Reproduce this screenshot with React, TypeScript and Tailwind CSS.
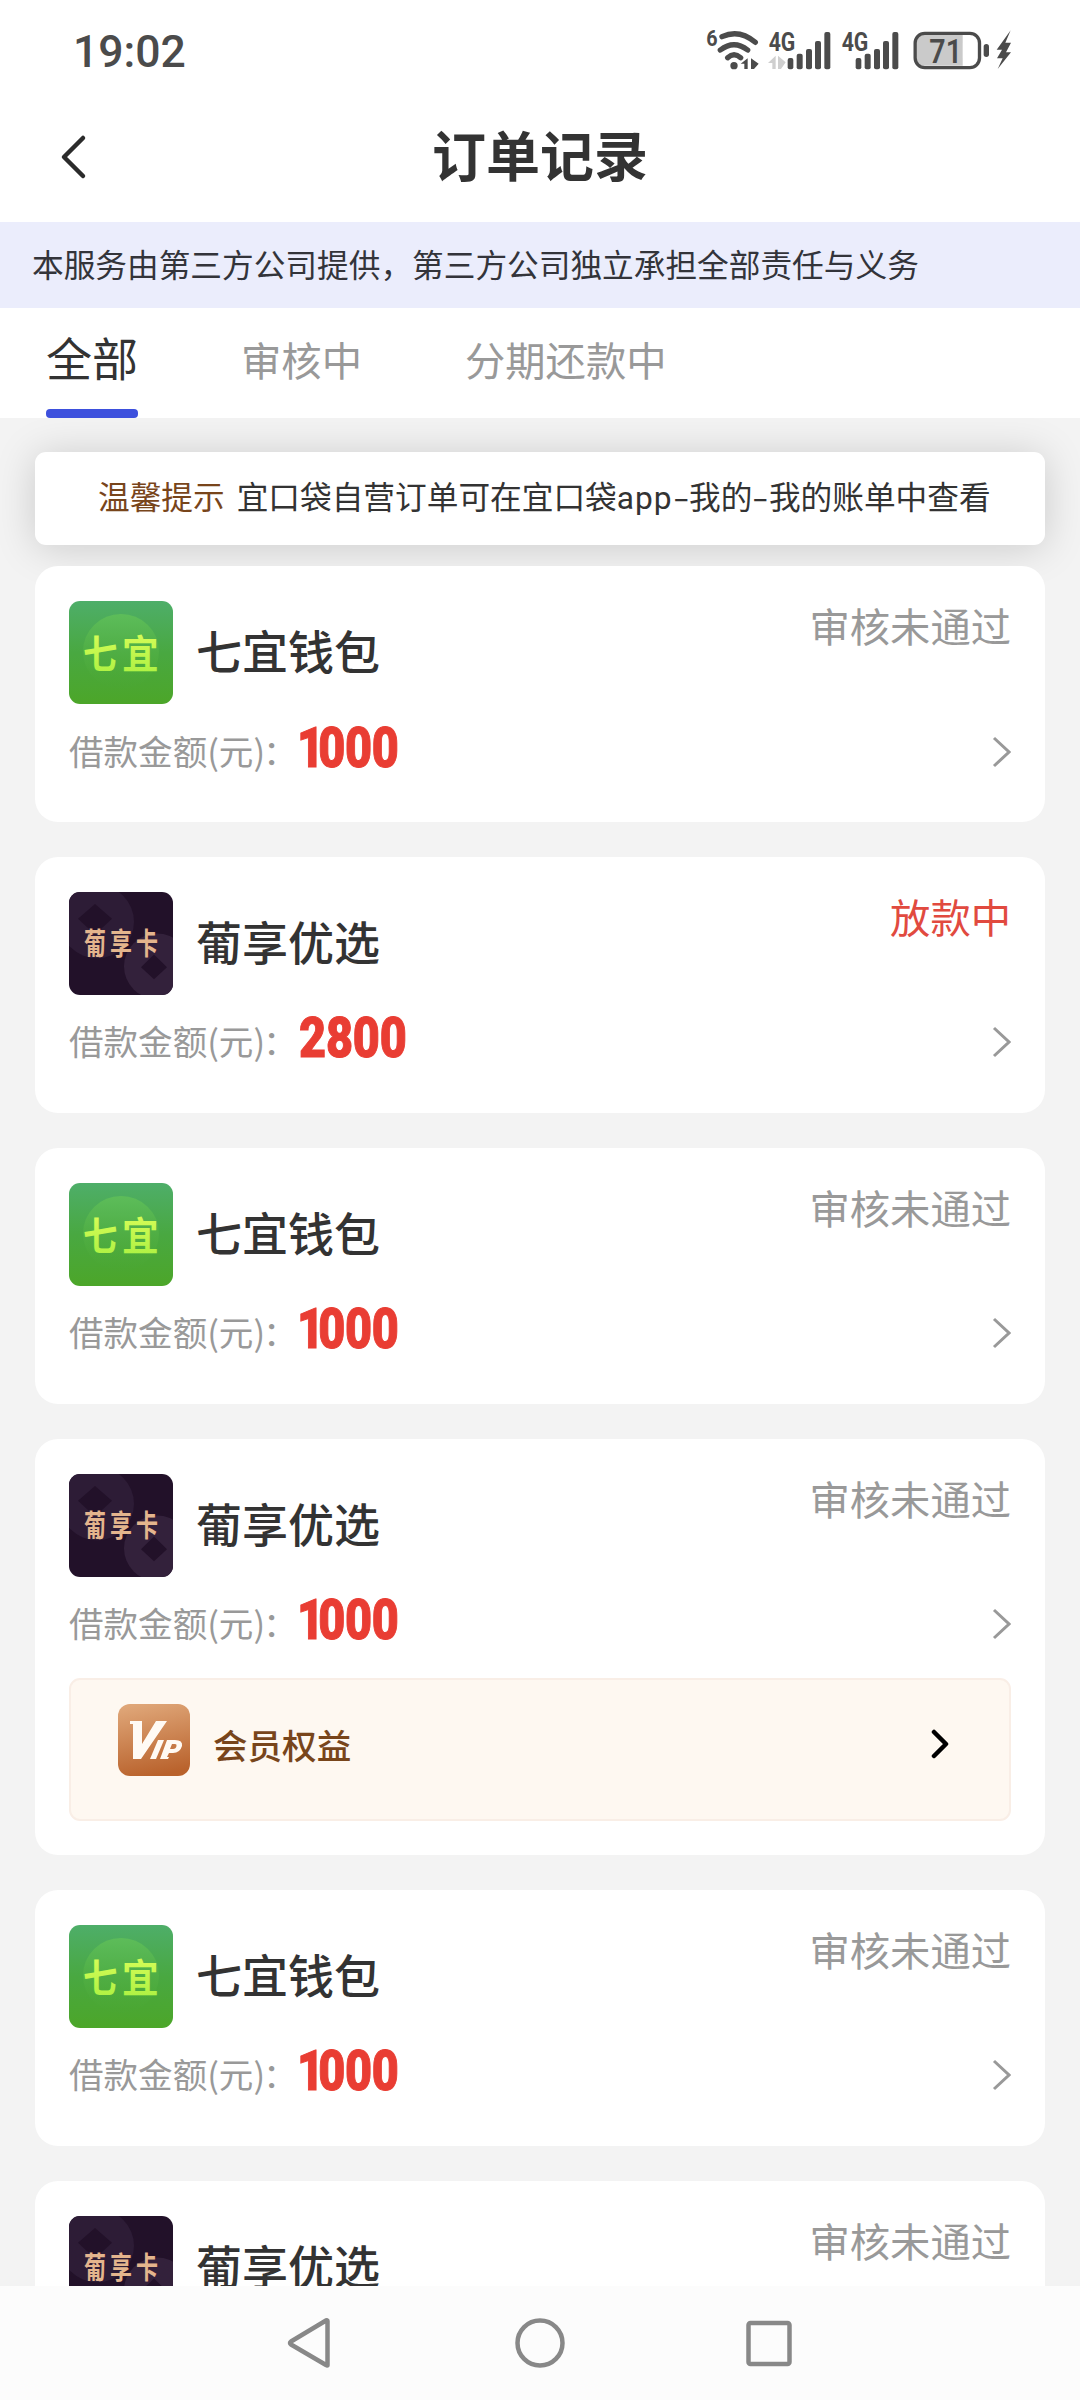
import React from "react";

type Brand = "qiyi" | "puxiang";

interface Order {
  brand: Brand;
  name: string;
  amount: string;
  status: string;
  active?: boolean;
  vip?: boolean;
}

const orders: Order[] = [
  { brand: "qiyi", name: "七宜钱包", amount: "1000", status: "审核未通过" },
  { brand: "puxiang", name: "葡享优选", amount: "2800", status: "放款中", active: true },
  { brand: "qiyi", name: "七宜钱包", amount: "1000", status: "审核未通过" },
  { brand: "puxiang", name: "葡享优选", amount: "1000", status: "审核未通过", vip: true },
  { brand: "qiyi", name: "七宜钱包", amount: "1000", status: "审核未通过" },
  { brand: "puxiang", name: "葡享优选", amount: "1000", status: "审核未通过" },
];

const CJK = "'Noto Sans CJK SC', sans-serif";

function StatusIcons() {
  return (
    <svg width="360" height="80" viewBox="0 0 1080 240" fill="#4b4b4b" className="shrink-0">
      <g fontFamily="Roboto, sans-serif" fontWeight="700">
        <text x="79" y="109" fontSize="66" textLength="34" lengthAdjust="spacingAndGlyphs">6</text>
        <text x="266" y="122" fontSize="76" textLength="80" lengthAdjust="spacingAndGlyphs">4G</text>
        <text x="485" y="122" fontSize="76" textLength="80" lengthAdjust="spacingAndGlyphs">4G</text>
      </g>
      <g fill="none" stroke="#4b4b4b" strokeWidth="16" strokeLinecap="round">
        <path d="M126 80 Q178 56 226 97" />
        <path d="M121 120 Q162 88 203 120" />
        <path d="M143 143 Q162 126 182 143" />
      </g>
      <circle cx="162" cy="167" r="11" />
      <path d="M182 161 L203 145 V177 H193 V161Z M213 145 L236 161 L222 177 H213Z" />
      <path d="M264 159 L287 137 V177 H277 V159Z M294 137 L317 157 L303 177 H294Z" fill="#cfcfcf" />
      {[0, 204].map((dx) => (
        <g key={dx} transform={`translate(${dx} 0)`}>
          <rect x="323" y="144" width="17" height="34" rx="6" />
          <rect x="350" y="131" width="18" height="47" rx="6" />
          <rect x="378" y="117" width="18" height="61" rx="6" />
          <rect x="405" y="93" width="18" height="85" rx="6" />
          <rect x="433" y="66" width="18" height="112" rx="6" />
        </g>
      ))}
      <path d="M728 75 H848 V167 H728 Q710 167 710 144 V98 Q710 75 728 75Z" fill="#cacaca" />
      <rect x="705.5" y="70" width="193" height="103" rx="29" fill="none" stroke="#4b4b4b" strokeWidth="10" />
      <rect x="911" y="102" width="16" height="39" rx="8" />
      <text x="748" y="158" fontSize="100" fontFamily="Roboto, sans-serif" fontWeight="600" textLength="98" lengthAdjust="spacingAndGlyphs">71</text>
      <path d="M992 61 L950 119 H966 L951 145 H968 L953 177 L993 127 H978 L993 98 H976Z" />
    </svg>
  );
}

function QiyiLogo() {
  return (
    <svg viewBox="0 0 104 104" className="h-[103px] w-[104px] shrink-0 rounded-[11px]" preserveAspectRatio="none">
      <defs>
        <linearGradient id="qy-bg" x1="0" y1="0" x2="0" y2="1">
          <stop offset="0" stopColor="#4eae69" />
          <stop offset="0.5" stopColor="#49a841" />
          <stop offset="1" stopColor="#4ca629" />
        </linearGradient>
        <linearGradient id="qy-disc" x1="0" y1="0" x2="0" y2="1">
          <stop offset="0" stopColor="#5dbd5a" />
          <stop offset="1" stopColor="#4aa632" stopOpacity="0.3" />
        </linearGradient>
        <linearGradient id="qy-text" x1="0" y1="0" x2="0" y2="1">
          <stop offset="0" stopColor="#e0ff5c" />
          <stop offset="1" stopColor="#a8f040" />
        </linearGradient>
      </defs>
      <rect width="104" height="104" fill="url(#qy-bg)" />
      <circle cx="52" cy="51" r="38" fill="url(#qy-disc)" />
      <g fontFamily={CJK} fontWeight="700" fill="url(#qy-text)">
        <text x="0" y="0" fontSize="39" transform="translate(14 68) scale(0.88 1)">七</text>
        <text x="0" y="0" fontSize="39" transform="translate(53 67.5) scale(0.94 1)">宜</text>
      </g>
    </svg>
  );
}

function PuxiangLogo() {
  return (
    <svg viewBox="0 0 104 104" className="h-[103px] w-[104px] shrink-0 rounded-[11px]" preserveAspectRatio="none">
      <rect width="104" height="104" fill="#221129" />
      <circle cx="28" cy="30" r="37" fill="#2d1c36" />
      <path d="M26 12 L43 27 L26 43 L9 27Z" fill="#221129" />
      <circle cx="88" cy="75" r="33" fill="#33213b" />
      <path d="M85 63 L98 76 L85 88 L72 76Z" fill="#221129" />
      <g fontFamily={CJK} fontWeight="700" fill="#e4b58d" transform="scale(1 1.38)">
        <text x="15" y="45.5" fontSize="22">葡</text>
        <text x="41" y="45.5" fontSize="22">享</text>
        <text x="67" y="45.5" fontSize="22">卡</text>
      </g>
    </svg>
  );
}

function VipLogo() {
  return (
    <svg viewBox="0 0 72 72" className="size-[72px] shrink-0 rounded-[12px]">
      <defs>
        <linearGradient id="vip-bg" x1="0.3" y1="0" x2="0.5" y2="1">
          <stop offset="0" stopColor="#dfa678" />
          <stop offset="1" stopColor="#b9622c" />
        </linearGradient>
      </defs>
      <rect width="72" height="72" fill="url(#vip-bg)" />
      <g fill="#fffaf4">
        <path d="M12 17 H24 V40 L38 17 H49 L23 55 H15 V20 H12Z" />
        <path d="M40 36 H46 L38 55 H32Z" />
        <path fillRule="evenodd" d="M49 36 H57 Q65 36 64 42 Q62 49 55 49 H51 L49 53 H51 L50 55 H42 Z M54 40 L52 45 H55 Q58 45 58.5 42 Q59 40 57 40Z" />
      </g>
    </svg>
  );
}

function Amount({ value }: { value: string }) {
  return (
    <span
      className={
        value.startsWith("1")
          ? "-ml-[2px] h-[42px] w-[116px] origin-left scale-x-[0.85] font-['Roboto',sans-serif] text-[55px] leading-[42px] font-black tracking-[-0.3px] whitespace-nowrap text-[#e93d33] [-webkit-text-stroke:1px_#e93d33] first-letter:tracking-[-7px]"
          : "h-[42px] w-[126px] origin-left scale-x-[0.85] font-['Roboto',sans-serif] text-[55px] leading-[42px] font-black tracking-[-0.2px] whitespace-nowrap text-[#e93d33] [-webkit-text-stroke:1px_#e93d33]"
      }
    >
      {value}
    </span>
  );
}

function OrderCard({ order }: { order: Order }) {
  return (
    <article className="shrink-0 rounded-[23px] bg-white px-[34px] pt-[35px] pb-[34px]">
      <div className="flex h-[103.5px] items-start">
        {order.brand === "qiyi" ? <QiyiLogo /> : <PuxiangLogo />}
        <h2 className="ml-[23px] text-[46px] leading-[96px] font-medium text-[#333]">{order.name}</h2>
        <span className={order.active ? "ml-auto text-[40.3px] leading-[48px] text-[#e14a3f]" : "ml-auto text-[40.3px] leading-[48px] text-[#999]"}>
          {order.status}
        </span>
      </div>
      <div className="flex h-[83.8px] items-start pt-[22px]">
        <span className="w-[230px] pt-px text-[34.56px] leading-[44px] whitespace-nowrap text-[#999]">
          借款金额(元)<span className="-ml-[2px]">：</span>
        </span>
        <Amount value={order.amount} />
        <svg width="20" height="32" viewBox="0 0 20 32" className="mt-[9px] ml-auto">
          <path d="M3 2 L18 16 L3 30" fill="none" stroke="#999" strokeWidth="3" />
        </svg>
      </div>
      {order.vip && (
        <div className="mt-[17px] flex h-[143.4px] items-start rounded-[11px] border-2 border-[#f9eee6] bg-[#fef8f1] pt-6 pr-[60px] pl-[47px]">
          <VipLogo />
          <span className="ml-[23px] pt-[15px] text-[34.56px] leading-[50px] font-medium text-[#78451b]">会员权益</span>
          <svg width="18" height="30" viewBox="0 0 18 30" className="mt-[25px] ml-auto">
            <path d="M3 3 L15 15 L3 27" fill="none" stroke="#000" strokeWidth="4.5" strokeLinecap="round" strokeLinejoin="round" />
          </svg>
        </div>
      )}
    </article>
  );
}

export default function App() {
  return (
    <div className="flex h-[2400px] w-[1080px] flex-col overflow-hidden bg-[#f3f3f3] font-['Noto_Sans_CJK_SC',sans-serif]">
      <div className="flex h-[100px] shrink-0 justify-between bg-white pt-[10px] pr-10 pl-[73px]">
        <span className="pt-[16px] font-['Roboto',sans-serif] text-[44.5px] leading-[53px] font-medium text-[#4b4b4b]">19:02</span>
        <StatusIcons />
      </div>

      <header className="grid h-[122px] shrink-0 grid-cols-[1fr_auto_1fr] items-center bg-white pb-[8px]">
        <svg width="28" height="46" viewBox="0 0 28 46" className="ml-[60px]">
          <path d="M23 4 L4 23 L23 42" fill="none" stroke="#2b2b2b" strokeWidth="4.5" strokeLinecap="round" strokeLinejoin="round" />
        </svg>
        <h1 className="pb-[6px] text-[54px] leading-[80px] font-bold text-[#333]">订单记录</h1>
      </header>

      <div className="h-[86px] shrink-0 bg-[#ebedfc] pl-8 text-[31.68px] leading-[82px] whitespace-nowrap text-[#33343a]">
        本服务由第三方公司提供，第三方公司独立承担全部责任与义务
      </div>

      <nav className="flex h-[110px] shrink-0 bg-white pl-[46px] text-[40.32px] leading-[102px] text-[#999]">
        <div className="flex h-full w-[92px] flex-col justify-between text-[46px] text-[#333]">
          <span className="h-[100px] leading-[97px]">全部</span>
          <span className="h-[9px] rounded-[4px] bg-[#3d50dd]" />
        </div>
        <span className="ml-[103px]">审核中</span>
        <span className="ml-[103px]">分期还款中</span>
      </nav>

      <main className="flex min-h-0 flex-1 flex-col overflow-hidden px-[35px] pt-[34px]">
        <div className="flex h-[93px] shrink-0 items-baseline rounded-[11px] bg-white pt-[21px] pl-[63px] text-[31.68px] leading-[44px] whitespace-nowrap text-[#333] shadow-[0_3px_40px_rgba(0,0,0,0.17)]">
          <span className="text-[#78451b]">温馨提示</span>
          <span className="ml-[12px]">
            宜口袋自营订单可在宜口袋<span className="font-['Roboto',sans-serif] tracking-[1px]">app</span>
            <span className="inline-block w-[16.5px] scale-x-150 text-center">-</span>我的
            <span className="inline-block w-[16.5px] scale-x-150 text-center">-</span>我的账单中查看
          </span>
        </div>
        <div className="mt-[21px] flex shrink-0 flex-col gap-[34.56px]">
          {orders.map((order, i) => (
            <OrderCard key={i} order={order} />
          ))}
        </div>
      </main>

      <footer className="flex h-[114px] shrink-0 items-start justify-center bg-[#fcfcfc] pt-[31px]">
        <svg width="510" height="52" viewBox="285 0 510 52" fill="none" stroke="#888" strokeWidth="4.5" strokeLinejoin="round">
          <path d="M327.5 4 V48 Q327.5 49 326 48 L291 27.5 Q289 26 291 24.5 L326 3.5 Q327.5 3 327.5 4Z" />
          <circle cx="540" cy="26" r="22.5" />
          <rect x="748.5" y="6" width="41" height="41" rx="2" />
        </svg>
      </footer>
    </div>
  );
}
